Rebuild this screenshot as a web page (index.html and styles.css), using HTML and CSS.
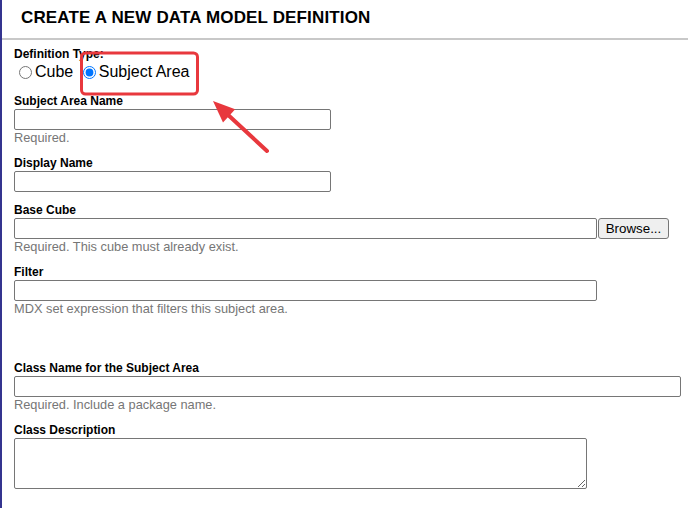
FILE: index.html
```html
<!DOCTYPE html>
<html>
<head>
<meta charset="utf-8">
<link rel="stylesheet" href="styles.css">
</head>
<body>
<div class="page">
  <div class="header"><h1 class="title">CREATE A NEW DATA MODEL DEFINITION</h1></div>
  <form class="form">
    <div class="field field-first">
      <div class="label">Definition Type:</div>
      <div class="radios"><label class="radio"><input type="radio" name="t">Cube</label> <label class="radio"><input type="radio" name="t" checked>Subject Area</label></div>
    </div>
    <div class="field field-after-radios">
      <div class="label">Subject Area Name</div>
      <input class="text w-small" type="text">
      <div class="hint">Required.</div>
    </div>
    <div class="field">
      <div class="label">Display Name</div>
      <input class="text w-small" type="text">
    </div>
    <div class="field">
      <div class="label">Base Cube</div>
      <div class="input-row"><input class="text w-mid" type="text"><button class="browse" type="button">Browse...</button></div>
      <div class="hint">Required. This cube must already exist.</div>
    </div>
    <div class="field">
      <div class="label">Filter</div>
      <input class="text w-mid" type="text">
      <div class="hint">MDX set expression that filters this subject area.</div>
    </div>
    <div class="field field-spaced">
      <div class="label">Class Name for the Subject Area</div>
      <input class="text w-wide" type="text">
      <div class="hint">Required. Include a package name.</div>
    </div>
    <div class="field">
      <div class="label">Class Description</div>
      <textarea class="area"></textarea>
    </div>
  </form>
  <svg class="annotation" width="688" height="508" viewBox="0 0 688 508">
    <rect x="81.5" y="53" width="116" height="41" rx="4" ry="4" fill="none" stroke="#e8383d" stroke-width="3"/>
    <line x1="267" y1="151" x2="226" y2="113" stroke="#e8383d" stroke-width="4" stroke-linecap="round"/>
    <polygon points="213,101 235.2,109.3 223,122.5" fill="#e8383d"/>
  </svg>
</div>
</body>
</html>
```
FILE: styles.css
```css
html, body {
  margin: 0;
  padding: 0;
  background: #ffffff;
}
.page {
  position: relative;
  min-height: 508px;
  border-left: 2px solid #34348f;
  font-family: "Liberation Sans", Arial, sans-serif;
  color: #000;
}
.header {
  height: 38px;
  border-bottom: 2px solid #c8c8c8;
  box-sizing: content-box;
}
.title {
  margin: 0;
  padding: 8px 0 0 19px;
  font-size: 17px;
  line-height: 20px;
  font-weight: bold;
  letter-spacing: 0.15px;
}
.form {
  padding: 0 0 0 12px;
}
.field {
  margin-top: 11px;
}
.field-first {
  margin-top: 7px;
}
.field-after-radios {
  margin-top: 13px;
}
.field-spaced {
  margin-top: 45px;
}
.label {
  font-size: 12px;
  line-height: 14px;
  font-weight: bold;
  margin-bottom: 1px;
}
.radios {
  font-size: 16px;
  line-height: 18px;
  padding-top: 1px;
}
.radio input {
  margin: 3px 3px 0 5px;
  vertical-align: -2px;
}
.text {
  display: block;
  box-sizing: border-box;
  height: 21px;
  border: 1px solid #767676;
  border-radius: 2px;
  padding: 1px 2px;
  font-family: "Liberation Sans", Arial, sans-serif;
  font-size: 13px;
  margin: 0;
}
.w-small { width: 317px; }
.w-mid { width: 583px; }
.w-wide { width: 667px; }
.input-row {
  display: flex;
  align-items: center;
}
.browse {
  box-sizing: border-box;
  width: 71px;
  height: 21px;
  margin: -1px 0 0 1px;
  padding: 0 4px;
  border: 1px solid #767676;
  border-radius: 3px;
  background: #efefef;
  font-family: "Liberation Sans", Arial, sans-serif;
  font-size: 13.33px;
  color: #000;
}
.hint {
  font-size: 12.8px;
  line-height: 15px;
  color: #767676;
}
.area {
  display: block;
  box-sizing: border-box;
  width: 573px;
  height: 51px;
  margin: 0;
  border: 1px solid #767676;
  border-radius: 2px;
  padding: 2px;
  font-family: "Liberation Sans", Arial, sans-serif;
}
.annotation {
  position: absolute;
  top: 0;
  left: -2px;
  pointer-events: none;
}
```
